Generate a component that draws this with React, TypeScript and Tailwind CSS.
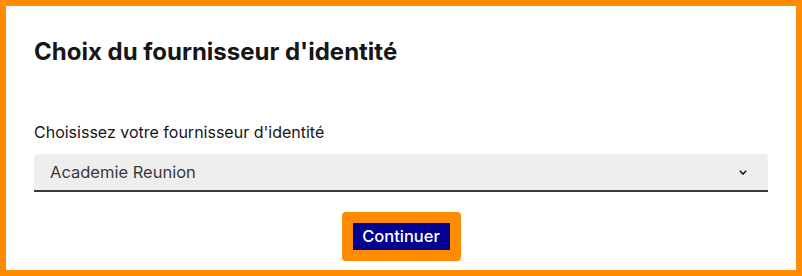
export default function App() {
  return (
    <div
      className="w-[802px] h-[276px] border-[6px] border-[#ff8c00] bg-white text-[#161616]"
      style={{ fontFamily: 'Inter, "Noto Sans", sans-serif' }}
    >
      <div className="px-[28px] pt-[30px]">
        <h1 className="text-[24px] font-bold leading-[32px]">Choix du fournisseur d'identité</h1>

        <div className="mt-[52px]">
          <label className="block text-[16px] leading-[24px]">
            Choisissez votre fournisseur d'identité
          </label>
          <div className="mt-[10px] flex h-[38px] items-center justify-between rounded-t-[4px] border-b-2 border-[#3a3a3a] bg-[#eeeeee] pl-[16px] pr-[21px]">
            <span className="text-[16.5px] text-[#3a3a3a]">Academie Reunion</span>
            <svg width="8" height="5" viewBox="0 0 8 5" fill="none">
              <path d="M0.8 0.8l3.2 3.2 3.2-3.2" stroke="#161616" strokeWidth="1.6" />
            </svg>
          </div>
        </div>

        <div className="mt-[20px] flex justify-center">
          <div className="rounded-[4px] bg-[#ff8c00] p-[11px]">
            <button className="block h-[27px] w-[97px] bg-[#000091] text-[16.5px] font-medium text-white">
              Continuer
            </button>
          </div>
        </div>
      </div>
    </div>
  );
}
